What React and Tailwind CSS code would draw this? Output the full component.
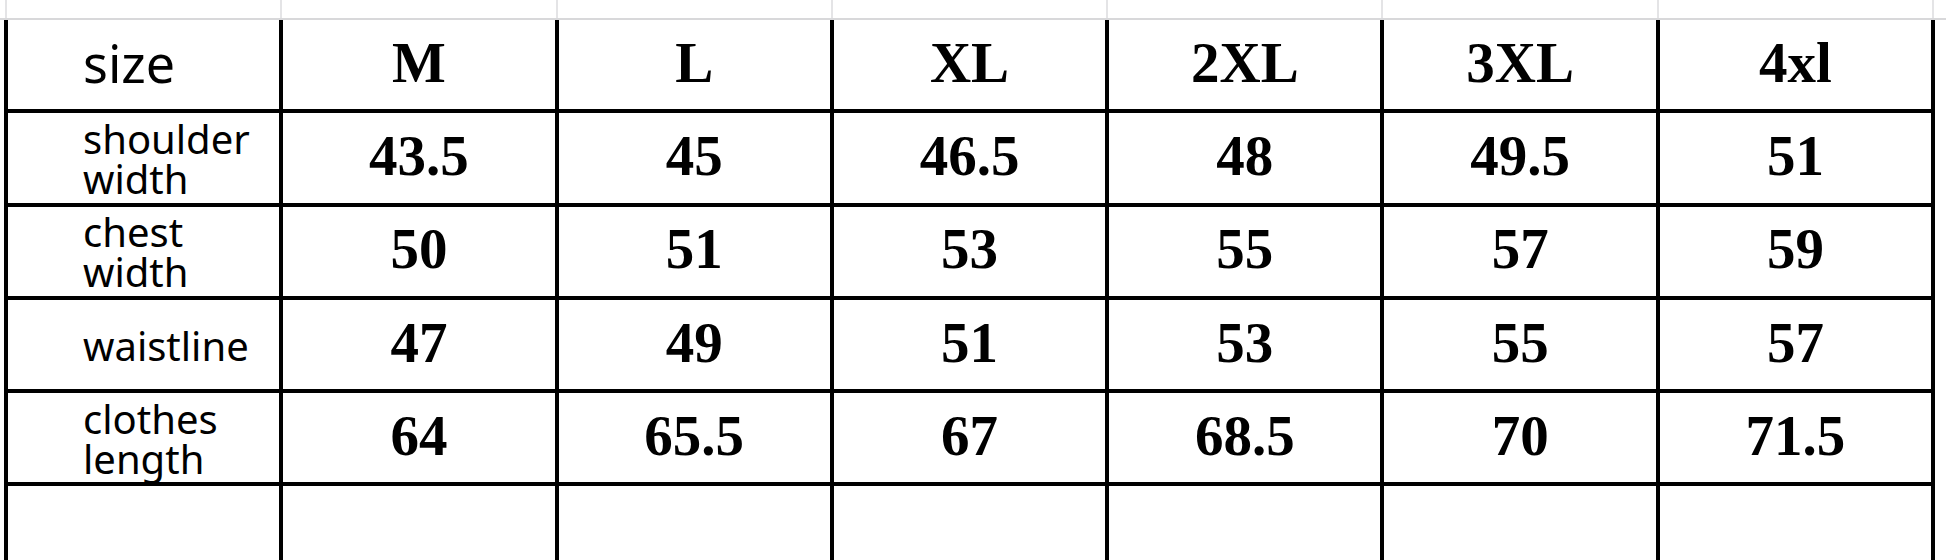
import React from "react";

const rows = [
  { label: ["shoulder", "width"], values: ["43.5", "45", "46.5", "48", "49.5", "51"] },
  { label: ["chest", "width"], values: ["50", "51", "53", "55", "57", "59"] },
  { label: ["waistline"], values: ["47", "49", "51", "53", "55", "57"] },
  { label: ["clothes", "length"], values: ["64", "65.5", "67", "68.5", "70", "71.5"] },
  { label: [], values: ["", "", "", "", "", ""] },
];

const sizes = ["M", "L", "XL", "2XL", "3XL", "4xl"];

const labelFont = { fontFamily: '"Noto Sans", sans-serif' };

const Cell = ({ children }) => (
  <div className="flex items-center justify-center border-r-4 border-b-4 border-black font-['Liberation_Serif',serif] text-[57px] font-bold leading-none text-black pb-[5px]">
    {children}
  </div>
);

const App = () => {
  return (
    <div className="w-[1946px] h-[560px] overflow-hidden bg-white">
      {/* faded row above the table */}
      <div className="h-[20px] border-b-2 border-[#d8d8da] pl-[5px]">
        <div className="grid h-full grid-cols-[repeat(7,275.3px)] border-l-2 border-[#e4e4e6]">
          {sizes.concat([""]).map((_, i) => (
            <div key={i} className="border-r-2 border-[#e4e4e6]" />
          ))}
        </div>
      </div>

      <div className="pl-[4px]">
        <div className="grid grid-cols-[repeat(7,275.3px)] grid-rows-[repeat(6,93.3px)] border-l-4 border-black">
          <div className="flex items-center border-r-4 border-b-4 border-black pl-[75px] pb-[4px]">
            <span style={labelFont} className="text-[52px] leading-none text-black">
              size
            </span>
          </div>
          {sizes.map((s) => (
            <Cell key={s}>{s}</Cell>
          ))}

          {rows.map((row, r) => (
            <React.Fragment key={r}>
              <div className="flex flex-col justify-center border-r-4 border-b-4 border-black pl-[75px] pt-[2px]">
                {row.label.map((t) => (
                  <span key={t} style={labelFont} className="text-[40px] leading-[40px] text-black">
                    {t}
                  </span>
                ))}
              </div>
              {row.values.map((v, i) => (
                <Cell key={i}>{v}</Cell>
              ))}
            </React.Fragment>
          ))}
        </div>
      </div>
    </div>
  );
};

export default App;
